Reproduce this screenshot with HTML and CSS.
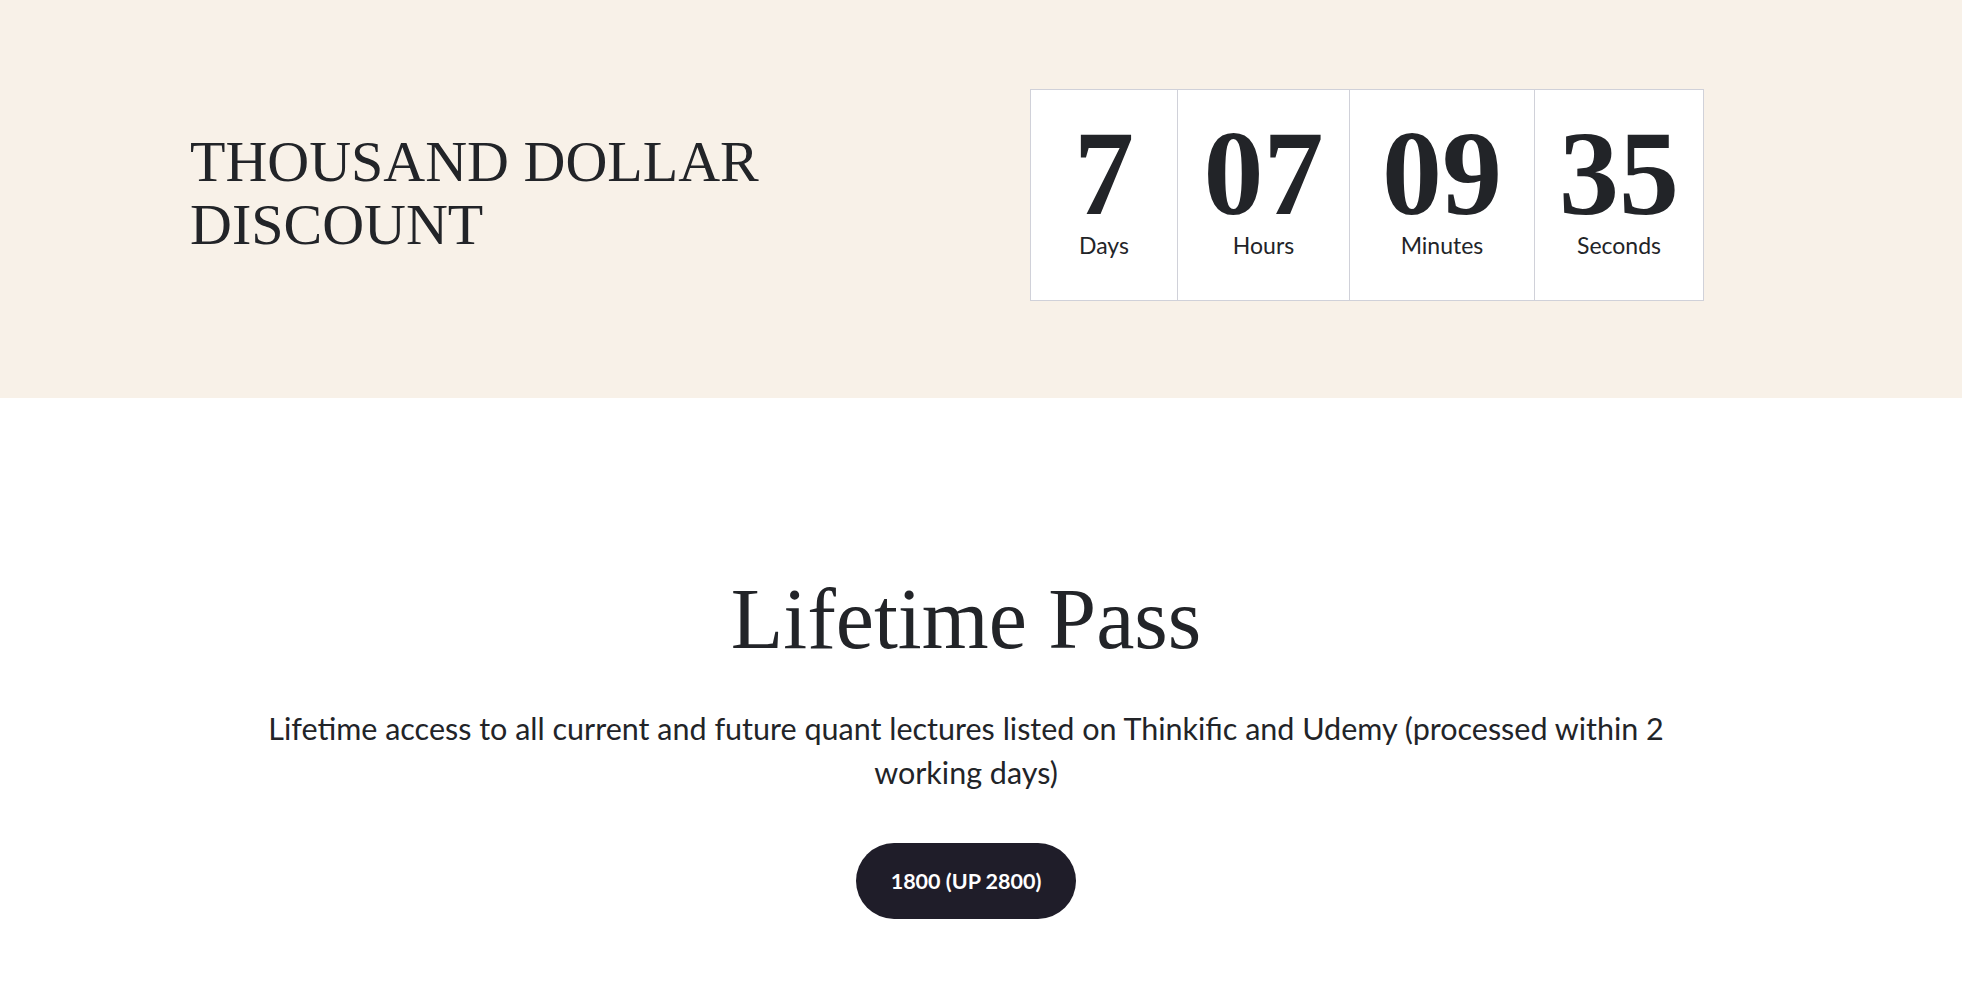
FILE: index.html
```html
<!DOCTYPE html>
<html lang="en">
<head>
<meta charset="utf-8">
<title>Thousand Dollar Discount</title>
<link rel="stylesheet" href="styles.css">
</head>
<body>
  <section class="banner">
    <h2 class="banner-title">THOUSAND DOLLAR<br>DISCOUNT</h2>
    <div class="countdown">
      <div class="cd-cell cd-days"><span class="cd-num">7</span><span class="cd-label">Days</span></div>
      <div class="cd-cell cd-hours"><span class="cd-num">07</span><span class="cd-label">Hours</span></div>
      <div class="cd-cell cd-minutes"><span class="cd-num">09</span><span class="cd-label">Minutes</span></div>
      <div class="cd-cell cd-seconds"><span class="cd-num">35</span><span class="cd-label">Seconds</span></div>
    </div>
  </section>
  <section class="pricing">
    <h1 class="pricing-title">Lifetime Pass</h1>
    <p class="pricing-text">Lifetime access to all current and future quant lectures listed on Thinkific and Udemy (processed within 2 working days)</p>
    <a class="pricing-btn" href="#">1800 (UP 2800)</a>
  </section>
</body>
</html>
```

FILE: styles.css
```css
* { box-sizing: border-box; }
html, body { margin: 0; padding: 0; background: #ffffff; color: #222428; }
body { font-family: "Lato", "Liberation Sans", sans-serif; }

.banner {
  background: #f8f1e8;
  height: 398px;
  display: flex;
  align-items: flex-start;
  padding: 89px 0 0 190px;
}
.banner-title {
  margin: 0;
  width: 840px;
  margin-top: 42px;
  font-family: "Liberation Serif", serif;
  font-weight: 400;
  font-size: 58px;
  line-height: 62.5px;
  color: #222428;
}
.countdown {
  display: grid;
  grid-template-columns: 146px 172px 185px 169px;
  height: 212px;
  border: 1px solid #d0d1d9;
  background: #ffffff;
}
.cd-cell {
  display: flex;
  flex-direction: column;
  align-items: center;
  padding-top: 28px;
  border-left: 1px solid #d0d1d9;
}
.cd-cell:first-child { border-left: none; }
.cd-num {
  font-family: "Liberation Serif", serif;
  font-weight: 700;
  font-size: 120px;
  line-height: 112px;
  color: #222428;
}
.cd-label {
  font-size: 23px;
  line-height: 30px;
  color: #222428;
}

.pricing {
  display: flex;
  flex-direction: column;
  align-items: center;
  padding: 170px 30px 0 0;
}
.pricing-title {
  margin: 0;
  font-family: "Liberation Serif", serif;
  font-weight: 400;
  font-size: 86px;
  line-height: 103px;
  color: #222428;
}
.pricing-text {
  margin: 35px 0 0;
  max-width: 1440px;
  text-align: center;
  font-size: 30.5px;
  line-height: 44px;
  color: #222428;
}
.pricing-btn {
  margin-top: 49px;
  display: inline-flex;
  align-items: center;
  justify-content: center;
  height: 76px;
  padding: 0 35px;
  border-radius: 38px;
  background: #1f1d29;
  color: #ffffff;
  font-weight: 700;
  font-size: 21.5px;
  text-decoration: none;
}
```
